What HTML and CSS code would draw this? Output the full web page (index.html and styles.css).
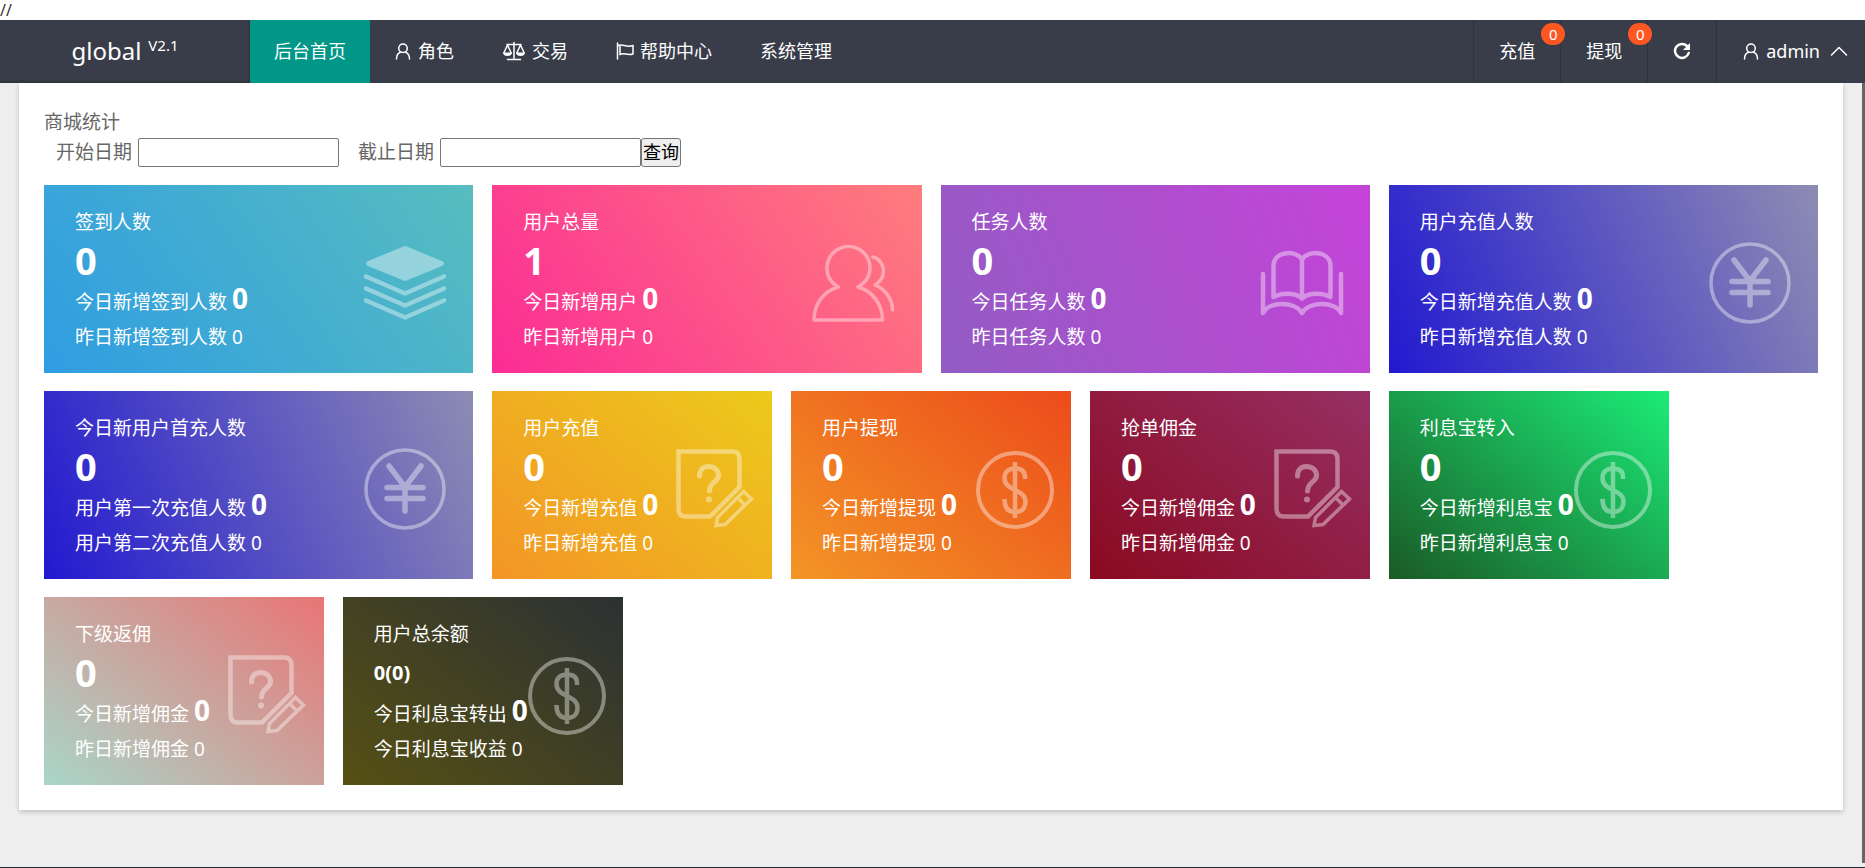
FILE: index.html
```html
<!DOCTYPE html>
<html lang="zh-CN">
<head>
<meta charset="utf-8">
<title>global</title>
<link rel="stylesheet" href="styles.css">
</head>
<body>
<svg class="sprite" aria-hidden="true">
  <symbol id="user" viewBox="0 0 18 18"><circle cx="9" cy="6.300" r="4.300"/><path d="M2.500 17c0-3.800 1.600-6 4.200-7M15.500 17c0-3.800-1.600-6-4.200-7"/></symbol>
  <symbol id="layers" viewBox="0 0 100 100"><path class="solid" d="M46 14.500Q50 12 54 14.500L87 28Q91 30.500 87 33L54 46.500Q50 49 46 46.500L13 33Q9 30.500 13 28Z"/><path d="M11 43.500 50 60.500 89 43.500M11 55.500 50 72.500 89 55.500M11 67.500 50 84.500 89 67.500" stroke-width="4.500"/></symbol>
  <symbol id="people" viewBox="0 0 100 100"><path stroke-width="3.500" d="M34.500 54C27 50 23 43 23 35A21.500 21.500 0 0 1 66 35C66 43 61 50 54 54C69 58 78.500 72 78.500 87H10C10 72 19 58 34.500 54ZM69 24C76 26 79.500 32 79.500 38C79.500 44 76 49 71 52C81 56 88.500 66 88.500 77"/></symbol>
  <symbol id="book" viewBox="0 0 100 100"><path stroke-width="4.500" d="M11 41V80C17 68 43 68 50 80C57 68 83 68 89 80V41M21.500 64V33C21.500 17 46 17 50 27C54 17 78.500 17 78.500 33V64C70 59 55 60 50 65.500C45 60 30 59 21.500 64ZM50 27V65"/></symbol>
  <symbol id="yen" viewBox="0 0 100 100"><circle cx="50" cy="50" r="39" stroke-width="3.500"/><path stroke-width="5.500" d="M34 27 50 48 66 27M32 48.500H68M32 59.500H68M50 48V72"/></symbol>
  <symbol id="dollar" viewBox="0 0 100 100"><circle cx="50" cy="51" r="37" stroke-width="4"/><path class="butt" stroke-width="4.500" d="M50 23V79M60 40V38C60 32 56 29.500 50 29.500C43.500 29.500 39.500 33 39.500 39C39.500 46 45 48.500 50 51C56 54 60.500 56.500 60.500 63C60.500 69 57 73 50 73C43 73 39.500 69 39.500 60"/></symbol>
  <symbol id="note" viewBox="0 0 100 100"><path class="butt" stroke-width="4.500" d="M12.500 12.500H66Q73.500 12.500 73.500 20V48L44 77.500H20Q12.500 77.500 12.500 70Z"/><path stroke-width="5" d="M33.500 37C33.500 31 37 27.500 42.500 27.500C48 27.500 52.500 31 52.500 36.500C52.500 43 43.500 43 43.500 52"/><circle class="solid" cx="43" cy="60.500" r="3"/><path class="butt" stroke-width="3.500" d="M50 86.500 51.500 78.500 77.500 52.500 85.500 60 59 85.500ZM71.500 58.500 79 66"/></symbol>
</svg>

<div class="stray">//</div>

<header class="header">
  <a class="logo" href="#">global <sup>V2.1</sup></a>
  <nav class="nav">
    <a class="nav-item active" href="#">后台首页</a>
    <a class="nav-item" href="#"><svg class="icon"><use href="#user"/></svg>角色</a>
    <a class="nav-item" href="#"><svg class="icon icon-wide" viewBox="0 0 24 20"><path d="M5 3.500H19M12 1.500V18M5.500 18.500H18.500M5.500 4 1.800 12M5.500 4 9.200 12M18.500 4 14.800 12M18.500 4 22.200 12"/><path class="solid" d="M1 11.500H10Q9.500 15 5.500 15T1 11.500ZM14 11.500H23Q22.500 15 18.500 15T14 11.500Z"/></svg>交易</a>
    <a class="nav-item" href="#"><svg class="icon" viewBox="0 0 18 18"><path d="M1.500 1V17M1.500 4C6 1 10 6 17 3.500V12C11 14 8 10 4 12.500V4"/></svg>帮助中心</a>
    <a class="nav-item" href="#">系统管理</a>
  </nav>
  <nav class="tools">
    <a class="tool" href="#">充值<span class="badge">0</span></a>
    <a class="tool" href="#">提现<span class="badge">0</span></a>
    <button class="tool" type="button" aria-label="刷新"><svg class="icon" viewBox="0 0 18 18"><path stroke-width="2.500" d="M14 4A7 7 0 1 0 15.700 11"/><path class="solid" d="M17 1V8H10Z"/></svg></button>
    <a class="tool account" href="#"><svg class="icon"><use href="#user"/></svg>admin<svg class="icon caret" viewBox="0 0 18 18"><path d="M1.500 13 9 5.500 16.500 13"/></svg></a>
  </nav>
</header>

<main class="main">
  <section class="panel">
    <h1 class="title">商城统计</h1>
    <form class="filter">
      <label for="start">开始日期</label><input id="start" type="text">
      <label for="end">截止日期</label><input id="end" type="text">
      <button type="button">查询</button>
    </form>
    <div class="cards">
      <article class="card wide teal"><h2>签到人数</h2><p class="total">0</p><p>今日新增签到人数 <b>0</b></p><p>昨日新增签到人数 0</p><svg class="art"><use href="#layers"/></svg></article>
      <article class="card wide pink"><h2>用户总量</h2><p class="total">1</p><p>今日新增用户 <b>0</b></p><p>昨日新增用户 0</p><svg class="art"><use href="#people"/></svg></article>
      <article class="card wide purple"><h2>任务人数</h2><p class="total">0</p><p>今日任务人数 <b>0</b></p><p>昨日任务人数 0</p><svg class="art"><use href="#book"/></svg></article>
      <article class="card wide blue"><h2>用户充值人数</h2><p class="total">0</p><p>今日新增充值人数 <b>0</b></p><p>昨日新增充值人数 0</p><svg class="art"><use href="#yen"/></svg></article>
      <article class="card wide blue"><h2>今日新用户首充人数</h2><p class="total">0</p><p>用户第一次充值人数 <b>0</b></p><p>用户第二次充值人数 0</p><svg class="art"><use href="#yen"/></svg></article>
      <article class="card yellow"><h2>用户充值</h2><p class="total">0</p><p>今日新增充值 <b>0</b></p><p>昨日新增充值 0</p><svg class="art"><use href="#note"/></svg></article>
      <article class="card orange"><h2>用户提现</h2><p class="total">0</p><p>今日新增提现 <b>0</b></p><p>昨日新增提现 0</p><svg class="art"><use href="#dollar"/></svg></article>
      <article class="card crimson"><h2>抢单佣金</h2><p class="total">0</p><p>今日新增佣金 <b>0</b></p><p>昨日新增佣金 0</p><svg class="art"><use href="#note"/></svg></article>
      <article class="card green"><h2>利息宝转入</h2><p class="total">0</p><p>今日新增利息宝 <b>0</b></p><p>昨日新增利息宝 0</p><svg class="art"><use href="#dollar"/></svg></article>
      <article class="card coral"><h2>下级返佣</h2><p class="total">0</p><p>今日新增佣金 <b>0</b></p><p>昨日新增佣金 0</p><svg class="art"><use href="#note"/></svg></article>
      <article class="card olive"><h2>用户总余额</h2><p class="total compact">0(0)</p><p>今日利息宝转出 <b>0</b></p><p>今日利息宝收益 0</p><svg class="art"><use href="#dollar"/></svg></article>
    </div>
  </section>
  <div class="rail"></div>
</main>
</body>
</html>
```

FILE: styles.css
```css
* { box-sizing: border-box; }

body {
  margin: 0;
  min-height: 100vh;
  display: flex;
  flex-direction: column;
  background: #fff;
  color: #666;
  font: 19px/30px "Noto Sans", "Noto Sans CJK SC", sans-serif;
}

h1, h2, p { margin: 0; font: inherit; }
a { color: inherit; text-decoration: none; }
svg { fill: none; stroke: currentColor; stroke-linecap: round; stroke-linejoin: round; }
.solid { fill: currentColor; stroke: none; }
.butt { stroke-linecap: butt; stroke-linejoin: miter; }
.sprite { position: absolute; width: 0; height: 0; }

.stray { color: #333; font-size: 16px; line-height: 20px; }

.header {
  display: flex;
  height: 63px;
  background: #393d49;
  color: #fff;
  font-size: 18px;
}
.logo {
  width: 250px;
  padding-bottom: 2px;
  display: flex;
  align-items: center;
  justify-content: center;
  gap: 7px;
  font-size: 24px;
  box-shadow: inset -1px -2px 2px rgba(0, 0, 0, 0.15);
}
.logo sup { font-size: 15px; line-height: 16px; padding-bottom: 12px; }

.nav { display: flex; flex: 1; }
.nav-item, .tool {
  position: relative;
  display: flex;
  align-items: center;
  gap: 6px;
  padding: 0 24px 2px;
  white-space: nowrap;
}
.nav-item.active { background: #009688; }
.icon { width: 18px; height: 18px; flex: none; stroke-width: 1.5px; }
.icon-wide { width: 24px; height: 20px; }

.tools { display: flex; }
.tool {
  padding: 0 25px 2px;
  border: 0;
  border-left: 1px solid #30333d;
  background: none;
  color: inherit;
  font: inherit;
}
.account { padding-right: 17px; }
.account .caret { margin-left: 4px; }
.badge {
  position: absolute;
  top: 3px;
  right: -5px;
  z-index: 1;
  width: 24px;
  border-radius: 11px;
  background: #ff5722;
  font-size: 15px;
  line-height: 22px;
  text-align: center;
}

.main {
  flex: 1;
  display: flex;
  background: #eee;
  border-bottom: 1px solid #23262e;
}
.panel {
  flex: 1;
  align-self: flex-start;
  margin: 0 19px;
  padding: 24px 25px 25px;
  background: #fff;
  box-shadow: 0 2px 5px rgba(0, 0, 0, 0.2);
}
.rail { width: 3px; margin-bottom: 4px; background: #666; }

.filter {
  display: flex;
  align-items: center;
  margin-bottom: 18px;
  padding-left: 12px;
}
.filter input {
  width: 201px;
  height: 29px;
  margin-left: 6px;
  border: 1px solid #767676;
  border-radius: 2px;
  background: #fff;
  font: inherit;
}
.filter input + label { margin-left: 19px; }
.filter button {
  width: 40px;
  height: 29px;
  padding: 0;
  border: 1px solid #767676;
  border-radius: 3px;
  background: #efefef;
  color: #000;
  font: inherit;
  font-size: 18px;
  line-height: 26px;
}

.cards { display: grid; grid-template-columns: repeat(12, 1fr); gap: 18px 19px; }
.card {
  position: relative;
  grid-column: span 2;
  min-width: 0;
  height: 188px;
  padding: 20px 31px;
  color: #fff;
  line-height: 35px;
  white-space: nowrap;
}
.card.wide { grid-column: span 3; }
.card b { font-size: 28px; line-height: 30px; }
.card .total { margin-bottom: 2px; font-size: 38px; line-height: 41px; font-weight: 700; }
.card .total.compact { font-size: 20px; }
.art {
  position: absolute;
  top: 48px;
  right: 6px;
  width: 100px;
  height: 100px;
  opacity: 0.4;
}
.wide .art { right: 18px; }

.teal { background: linear-gradient(-125deg, #57bdbf, #2f9de2); }
.pink { background: linear-gradient(-125deg, #ff7d7d, #fb2c95); }
.purple { background: linear-gradient(-113deg, #c543d8, #925cc3); }
.blue { background: linear-gradient(-113deg, #8e8cb3, #2219d0); }
.yellow { background: linear-gradient(-141deg, #ecca1b, #f39526); }
.orange { background: linear-gradient(-141deg, #ec4b1b, #f39526); }
.crimson { background: linear-gradient(-141deg, #963064, #8a0920); }
.green { background: linear-gradient(-141deg, #1bec78, #1a5a25); }
.coral { background: linear-gradient(-141deg, #e97575, #a9d6c8); }
.olive { background: linear-gradient(-141deg, #2c3133, #565014); }
```
